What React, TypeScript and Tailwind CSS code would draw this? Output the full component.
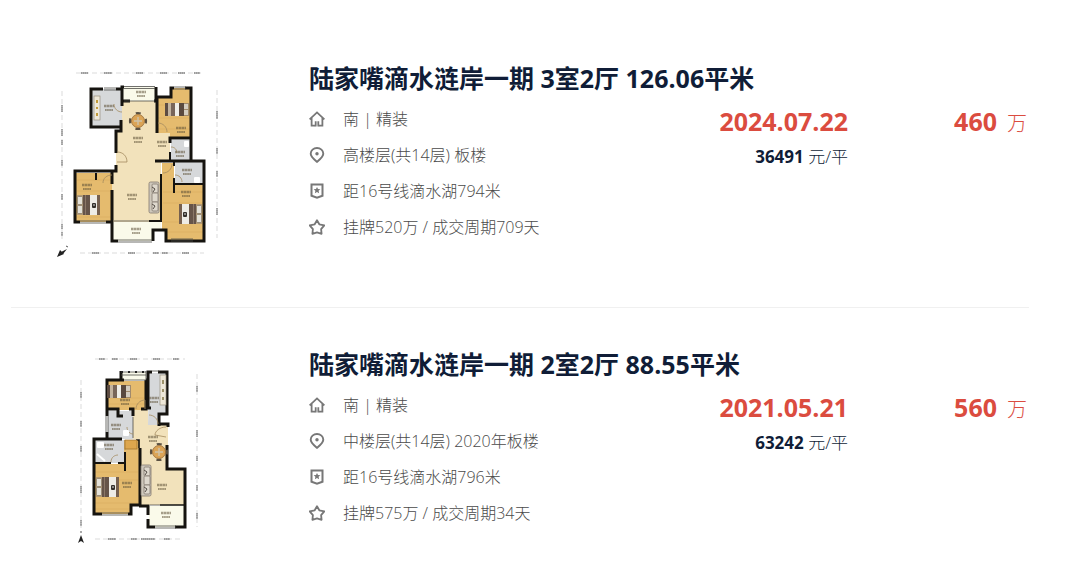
import type { ReactNode } from "react";

type Deal = {
  id: string;
  title: string;
  orientation: string;
  floor: string;
  metro: string;
  cycle: string;
  date: string;
  price: string;
  unitPrice: string;
  plan: ReactNode;
};

const WALL = "#15130f";
const WOOD = "#e5bb6e";
const TILE = "#f2e2bb";
const GREY = "#d6d8da";
const PALE = "#fafaea";

// two short strokes standing for a room name and its area
function RoomMark({ x, y }: { x: number; y: number }) {
  return (
    <g stroke="#5e5238" strokeOpacity="0.55">
      <path d={`M${x - 5} ${y}h10`} strokeWidth="2.4" strokeDasharray="2.6 0.4" />
      <path d={`M${x - 4} ${y + 4}h8`} strokeWidth="1.8" strokeDasharray="1.7 0.4" />
    </g>
  );
}

function Bed({ x, y, flip }: { x: number; y: number; flip?: boolean }) {
  return (
    <g transform={flip ? `translate(${x + 23} ${y}) scale(-1 1)` : `translate(${x} ${y})`}>
      <rect width="23" height="20" fill="#b59b75" />
      <rect x="0.5" y="1.5" width="5" height="8" rx="1" fill="#e4e1d8" stroke="#786b59" strokeWidth="0.6" />
      <rect x="0.5" y="10.5" width="5" height="8" rx="1" fill="#e4e1d8" stroke="#786b59" strokeWidth="0.6" />
      <rect x="6" width="7" height="20" fill="#665449" />
      <rect x="8" width="1" height="20" fill="#8b7869" />
      <rect x="13" width="7" height="20" fill="#eeece6" />
      <rect x="20" width="3" height="20" fill="#76604f" />
      <rect x="15" y="8" width="4" height="5" rx="1" fill="#332f2b" />
      <path d="M16 10h2" stroke="#ddd" strokeWidth="1" />
    </g>
  );
}

function SmallBed({ x, y }: { x: number; y: number }) {
  return (
    <g transform={`translate(${x} ${y})`}>
      <rect width="24" height="13" fill="#a18a6c" />
      <rect width="3" height="13" fill="#5d4c42" />
      <rect x="3" width="6" height="13" fill="#c3b4a0" />
      <rect x="6" width="4" height="13" fill="#78665a" />
      <rect x="10" width="4" height="13" fill="#efeee8" />
      <rect x="14" width="5" height="13" fill="#5a4a40" />
      <rect x="19" y="1" width="4" height="5" fill="#d4cdc0" />
      <rect x="19" y="7" width="4" height="5" fill="#d4cdc0" />
    </g>
  );
}

function DiningTable({ x, y }: { x: number; y: number }) {
  return (
    <g>
      <circle cx={x} cy={y} r="8" fill="none" stroke="#5b5142" strokeWidth="2.2" strokeDasharray="5 7.57" strokeDashoffset="2.5" />
      <circle cx={x} cy={y} r="6.5" fill="#dba456" stroke="#94662f" strokeWidth="0.8" />
      <path d={`M${x - 4} ${y}h8M${x} ${y - 4}v8`} stroke="#cfc3ab" strokeWidth="1.4" />
    </g>
  );
}

function Sofa({ x, y }: { x: number; y: number }) {
  return (
    <g transform={`translate(${x} ${y})`} stroke="#837a6e" strokeWidth="0.8">
      <rect width="10" height="31" rx="1.5" fill="#cfc8bc" />
      <rect x="3" y="2" width="6" height="9" rx="1" fill="#ded8cd" />
      <rect x="3" y="11" width="6" height="9" rx="1" fill="#ded8cd" />
      <rect x="3" y="20" width="6" height="9" rx="1" fill="#ded8cd" />
      <path d="M3 5l3 2-2 3M3 22l3 2-2 3" fill="none" stroke="#544d46" strokeWidth="1" />
    </g>
  );
}

function ThreeRoomPlan() {
  return (
    <svg viewBox="40 60 200 200" className="size-[200px]" role="img" aria-label="3室2厅">
      <path d="M122 101h34v32h14v29h-9v60h-49v-51h4v-41h6z" fill={TILE} />
      <path d="M123 87h33v14h-33zM113 222h48v9h-8v10h-40z" fill={PALE} />
      <path d="M92 89h30v38h-30z" fill={GREY} />
      <path d="M157 97h14v-9h20v50h-21v-5h-13z" fill={WOOD} />
      <path d="M171 140h20v21h-20zM175 162h29v22h-29z" fill={GREY} />
      <path d="M162 163h12v22h30v55h-38v-10h-4zM76 173h36v49h-36z" fill={WOOD} />
      <g stroke="#c28d40" strokeOpacity="0.25" strokeWidth="0.7">
        <path d="M158 105h33M158 118h33M158 129h33M163 192h41M163 203h41M163 222h41M163 232h41M77 180h34M77 191h34M77 217h34" />
      </g>
      <g fill="none" stroke={WALL} strokeWidth="3">
        <path d="M122 90v-1.500M122 89h-6M103 89h-12v38h30v-7M122 106v-19h2M91 127h30v4h-5v22" />
        <path d="M156 87v14h-2M130 101h-8M157 133v-36h14v-9h3M185 88h6v50h-21v5M191 138v23M155 161h17M170 161h34v80h-38v-11h-13v11" />
        <path d="M174 162v4M174 178v15M174 184h30M161 174v48" strokeWidth="2" />
        <path d="M116 165v6h-41v51h5M106 222h6v19h6M112 172v12M112 190v32" />
        <path d="M96 173v7M149 221h12M170 152v9" strokeWidth="2" />
      </g>
      <g fill="none" stroke="#4c4b48" strokeWidth="0.8">
        <path d="M124 86.500h31M124 88.500h31M124 101h31M104 88h12M104 90h12M174 87h12M174 89h12M80 221h26M80 223h26M114 221h35M118 240h34M118 242h34M171 239h22M171 241h22" />
        <path d="M122 112c-4 0-8-3-8-8M117 152c6 0 10 4 10 10h-10M112 175c-5 0-9 3-9 8M158 123c5 0 9 4 9 9M163 173c5 0 9-4 9-9M175 175c4 0 7 3 7 7M171 147c4 0 6 3 6 6" stroke="#a58b60" />
      </g>
      <rect x="94" y="96" width="6" height="24" fill="#eee8d9" stroke="#99917f" strokeWidth="0.7" />
      <path d="M97 100v3M97 107v2M97 113v3" stroke="#c29a3a" strokeWidth="2" />
      <rect x="184" y="141" width="5" height="6" rx="1" fill="#fff" />
      <rect x="194" y="177" width="6" height="6" rx="1" fill="#fff" />
      <DiningTable x={138} y={121} />
      <SmallBed x={165} y={103} />
      <Bed x={77} y={195} />
      <Bed x={179} y={204} flip />
      <Sofa x={149} y={182} />
      <RoomMark x={109} y={106} />
      <RoomMark x={141} y={92} />
      <RoomMark x={181} y={128} />
      <RoomMark x={138} y={138} />
      <RoomMark x={162} y={142} />
      <RoomMark x={180} y={152} />
      <RoomMark x={187} y={170} />
      <RoomMark x={87} y={185} />
      <RoomMark x={132} y={195} />
      <RoomMark x={186} y={192} />
      <RoomMark x={136} y={229} />
      <g fill="none" stroke="#c4c4c4" strokeWidth="0.6" strokeDasharray="5 3">
        <path d="M76 73h128M80 253h124M62 91v148M217 90v148" />
      </g>
      <g fill="none" stroke="#9c9c9c" strokeWidth="1.800">
        <path d="M81 73h7M104 73h8M136 73h7M160 73h7M178 73h7M194 73h6M92 253h7M128 253h7M153 253h6M162 253h6M182 253h7" strokeDasharray="1.700 0.300" />
        <path d="M62 105v7M62 129v7M62 140v5M62 160v6M62 194v6M62 224v5M62 232v4M217 111v8M217 148v6M217 171v6M217 208v7" strokeDasharray="1.700 0.300" />
      </g>
      <path d="M57 257l3-7 4 4zM61 252l6-3-4 5z" fill="#222" />
      <path d="M66 246l2 1" stroke="#555" />
    </svg>
  );
}

function TwoRoomPlan() {
  return (
    <svg viewBox="40 346 200 200" className="size-[200px]" role="img" aria-label="2室2厅">
      <path d="M133 410h15v15h20v44h17v36h-46v-66h-6z" fill={TILE} />
      <path d="M121 372h25v8h-25zM149 506h35v21h-35z" fill={PALE} />
      <path d="M108 381h38v29h-38zM124 440h15v65h-9v9h-36v-50h30z" fill={WOOD} />
      <path d="M149 373h18v40h-8v12h-11zM108 411h25v28h-25zM95 440h29v23h-29z" fill={GREY} />
      <g stroke="#c28d40" strokeOpacity="0.25" strokeWidth="0.7">
        <path d="M108 398h38M108 404h38M95 472h43M95 480h43M95 503h43M95 509h35" />
      </g>
      <g fill="none" stroke={WALL} strokeWidth="3">
        <path d="M121 371v9h-14v36M107 432v7h-13v75h8M122 439h-28M107 409h11v7h5M129 409h4v7M121 380h3M146 380v29h-5" />
        <path d="M152 372h-4v36h3M148 380h-2M158 372h9v42h-8v12M160 424h8v3M167 445v24h18v58h-10M155 527h-7v-8M148 515v-9h-9M128 514h3v-9h9v-57" />
        <path d="M125 452v19M95 463h16M118 463h7" strokeWidth="2" />
        <path d="M160 505h25M139 448v-8h-3" strokeWidth="1.600" />
      </g>
      <g fill="none" stroke="#4c4b48" strokeWidth="0.800">
        <path d="M121 372h25M121 375h25M146 371v9M124 380h22M152 371h7M102 513h26M102 515h26M150 505h24M155 526h21M155 528h21" />
        <path d="M106 416v16M108 416v16M133 417v21" />
        <path d="M136 409c0-5 4-9 9-9v9M149 415c5 0 9 4 9 9M166 427c-6 0-11 4-11 8l11 2M125 440v10M111 462c0-5 4-7 7-7M127 427c0 4 3 7 6 7" stroke="#a58b60" />
      </g>
      <path d="M121 372h26" stroke="#222" strokeWidth="2" strokeDasharray="2 5" />
      <rect x="160" y="375" width="6" height="30" fill="#eee8d9" stroke="#99917f" strokeWidth="0.700" />
      <path d="M163 380v4M163 389v3M163 397v3" stroke="#9e9269" strokeWidth="2" />
      <rect x="125" y="440" width="12" height="9" fill="#dda64d" stroke="#9b6d27" strokeWidth="0.700" />
      <rect x="123" y="430" width="6" height="6" rx="1" fill="#fff" />
      <rect x="97" y="442" width="7" height="6" rx="1" fill="#fff" />
      <path d="M97 454l8 7" stroke="#fff" strokeWidth="2" />
      <SmallBed x={107} y={385} />
      <Bed x={96} y={477} />
      <Sofa x={141} y={465} />
      <DiningTable x={159} y={452} />
      <RoomMark x={125} y={400} />
      <RoomMark x={154} y={398} />
      <RoomMark x={116} y={425} />
      <RoomMark x={109} y={445} />
      <RoomMark x={153} y={437} />
      <RoomMark x={127} y={483} />
      <RoomMark x={162} y={485} />
      <RoomMark x={166} y={513} />
      <g fill="none" stroke="#c4c4c4" strokeWidth="0.600" strokeDasharray="5 3">
        <path d="M95 359h90M95 539h85M81 380v148M197 374v153" />
      </g>
      <g fill="none" stroke="#9c9c9c" strokeWidth="1.800">
        <path d="M99 359h6M112 359h6M130 359h7M153 359h7M173 359h6M108 539h8M131 539h6M141 539h14M164 539h6" strokeDasharray="1.700 0.300" />
        <path d="M81 392v6M81 421v6M81 446v6M81 486v7M81 520v6M197 386v6M197 430v7M197 456v5M197 485v6M197 513v6" strokeDasharray="1.700 0.300" />
      </g>
      <path d="M78 543l3-8 3 8-3-2z" fill="#222" />
      <path d="M81 531v2" stroke="#555" />
    </svg>
  );
}

function HouseIcon() {
  return (
    <svg viewBox="0 0 16 16" className="size-4" fill="none" stroke="#777" strokeWidth="1.800" aria-hidden="true">
      <path d="M0.600 8.400L8 1.400l7.400 7M2.600 7v7.600h3.600M13.400 7v7.600H9.800" />
      <path d="M6.700 15.400V10.200M9.300 15.400V10.200" />
    </svg>
  );
}

function PinIcon() {
  return (
    <svg viewBox="0 0 16 16" className="size-4" fill="none" stroke="#777" strokeWidth="1.900" aria-hidden="true">
      <path d="M8 14.900C5 12.300 1.700 9.600 1.700 6.700a6.300 5.700 0 0 1 12.600 0C14.300 9.600 11 12.300 8 14.900z" />
      <circle cx="8" cy="6.800" r="1.700" fill="#777" stroke="none" />
    </svg>
  );
}

function MetroIcon() {
  return (
    <svg viewBox="0 0 16 16" className="size-4" fill="none" stroke="#777" strokeWidth="2" aria-hidden="true">
      <path d="M2.500 1.500h11v11.200L8 14.800l-5.500-2.100z" />
      <path d="M8 4l1 2 2.400.2-1.800 1.600.5 2.500L8 9l-2.100 1.300.5-2.500L4.600 6.200 7 6z" fill="#777" stroke="none" />
    </svg>
  );
}

function StarIcon() {
  return (
    <svg viewBox="0 0 16 16" className="size-4" fill="none" stroke="#777" strokeWidth="1.800" strokeLinejoin="round" aria-hidden="true">
      <path d="M8 1.200l2.300 4.100 5 1-3.200 3.800.5 4.700L8 13.300l-4.600 1.500.5-4.700L.7 6.300l5-1z" />
    </svg>
  );
}

const deals: Deal[] = [
  {
    id: "126",
    title: "陆家嘴滴水涟岸一期 3室2厅 126.06平米",
    orientation: "南 | 精装",
    floor: "高楼层(共14层) 板楼",
    metro: "距16号线滴水湖794米",
    cycle: "挂牌520万 / 成交周期709天",
    date: "2024.07.22",
    price: "460",
    unitPrice: "36491",
    plan: <ThreeRoomPlan />,
  },
  {
    id: "88",
    title: "陆家嘴滴水涟岸一期 2室2厅 88.55平米",
    orientation: "南 | 精装",
    floor: "中楼层(共14层) 2020年板楼",
    metro: "距16号线滴水湖796米",
    cycle: "挂牌575万 / 成交周期34天",
    date: "2021.05.21",
    price: "560",
    unitPrice: "63242",
    plan: <TwoRoomPlan />,
  },
];

function DetailRow({ icon, children }: { icon: ReactNode; children: ReactNode }) {
  return (
    <li className="flex h-9 items-center gap-[18px]">
      {icon}
      <span>{children}</span>
    </li>
  );
}

function DealItem({ deal }: { deal: Deal }) {
  return (
    <li className="flex border-b border-[#f0f0f0] pt-[38px] pb-[47px] last:border-b-0">
      <div className="ml-[29px] shrink-0">{deal.plan}</div>
      <div className="ml-[69px] min-w-0 flex-1">
        <h2 className="text-[25px] leading-9 font-bold whitespace-nowrap text-[#101d37]">
          {deal.title}
        </h2>
        <div className="mt-[5px] flex">
          <ul className="flex-1 text-base font-light whitespace-nowrap text-[#4a4a4a]">
            <DetailRow icon={<HouseIcon />}>{deal.orientation}</DetailRow>
            <DetailRow icon={<PinIcon />}>{deal.floor}</DetailRow>
            <DetailRow icon={<MetroIcon />}>{deal.metro}</DetailRow>
            <DetailRow icon={<StarIcon />}>{deal.cycle}</DetailRow>
          </ul>
          <div className="text-right whitespace-nowrap">
            <p className="text-[25px] leading-10 font-bold text-[#db4c3f]">{deal.date}</p>
            <p className="text-[17px] leading-8 font-light text-[#101d37]">
              <span className="font-bold">{deal.unitPrice}</span> 元/平
            </p>
          </div>
          <p className="w-[181px] pr-0.5 text-right leading-10 font-light whitespace-nowrap text-[#db4c3f]">
            <span className="mr-2.5 text-[25px] font-bold">{deal.price}</span>
            <span className="text-xl">万</span>
          </p>
        </div>
      </div>
    </li>
  );
}

export default function App() {
  return (
    <main className="bg-white pt-[22px] pr-[51px] pl-[11px] font-['Open_Sans','Noto_Sans_CJK_SC',sans-serif]">
      <ul>
        {deals.map((deal) => (
          <DealItem key={deal.id} deal={deal} />
        ))}
      </ul>
    </main>
  );
}
